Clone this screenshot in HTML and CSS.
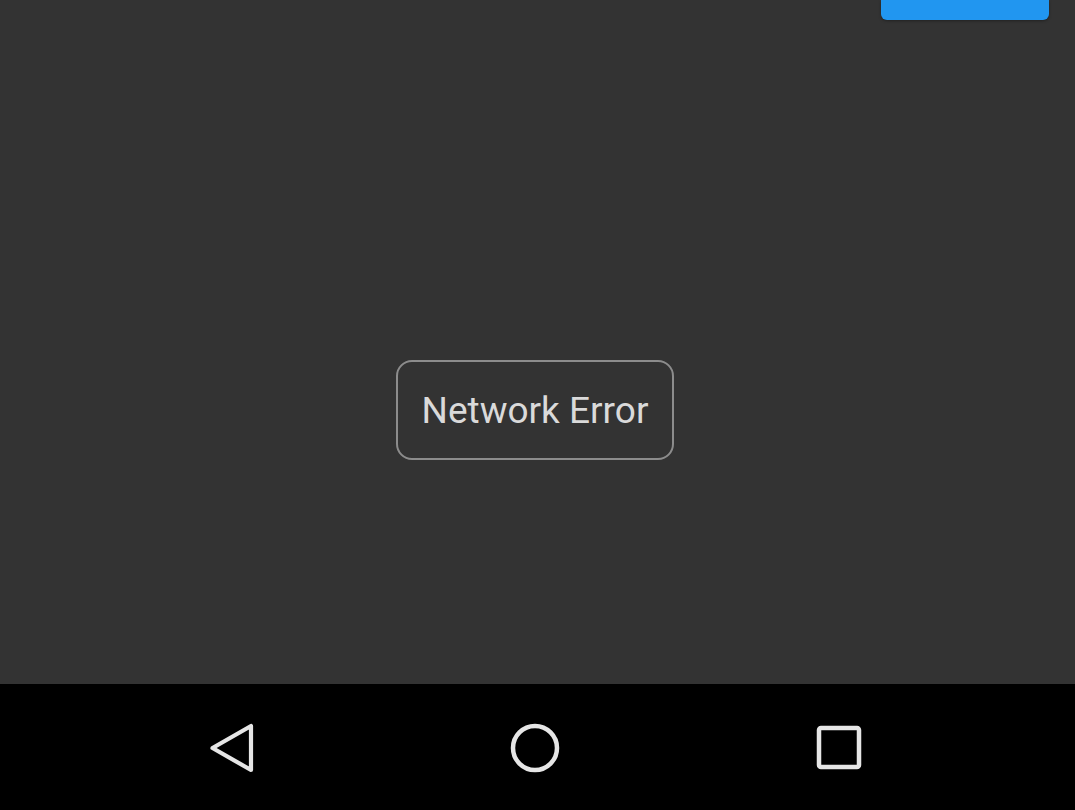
FILE: index.html
```html
<!DOCTYPE html>
<html>
<head>
<meta charset="utf-8">
<link rel="stylesheet" href="styles.css">
</head>
<body>
<div class="screen">
  <div class="main">
    <div class="topbar">
      <div class="blue-btn"></div>
    </div>
    <div class="content">
      <div class="error-box">Network Error</div>
    </div>
  </div>
  <div class="navbar">
    <div class="nav-icon">
      <svg width="56" height="56" viewBox="0 0 56 56"><path d="M48 6 L48 50 L9.5 28 Z" fill="none" stroke="#e6e6e6" stroke-width="4.2" stroke-linejoin="round"/></svg>
    </div>
    <div class="nav-icon">
      <svg width="56" height="56" viewBox="0 0 56 56"><circle cx="28" cy="28" r="22" fill="none" stroke="#e6e6e6" stroke-width="4.5"/></svg>
    </div>
    <div class="nav-icon">
      <svg width="56" height="56" viewBox="0 0 56 56"><rect x="8" y="8" width="40" height="39" rx="2" fill="none" stroke="#e6e6e6" stroke-width="4.5"/></svg>
    </div>
  </div>
</div>
</body>
</html>
```
FILE: styles.css
```css
html, body {
  margin: 0;
  padding: 0;
  background: #000;
}
.screen {
  width: 1075px;
  height: 810px;
  display: flex;
  flex-direction: column;
  font-family: Roboto, "Noto Sans", sans-serif;
}
.main {
  height: 684px;
  background: #333333;
  display: flex;
  flex-direction: column;
}
.topbar {
  height: 20px;
  display: flex;
  justify-content: flex-end;
  padding-right: 26px;
}
.blue-btn {
  width: 168px;
  height: 20px;
  background: #2196f0;
  border-radius: 0 0 6px 6px;
  box-shadow: 0 1px 3px rgba(0,0,0,0.35);
}
.content {
  flex: 1;
  display: flex;
  justify-content: center;
  align-items: flex-start;
  padding-top: 340px;
  padding-right: 5px;
}
.error-box {
  width: 274px;
  height: 96px;
  border: 2px solid #8c8c8c;
  border-radius: 16px;
  display: flex;
  align-items: center;
  justify-content: center;
  color: #dadada;
  font-size: 37px;
}
.navbar {
  flex: 1;
  background: #000;
  display: flex;
  justify-content: center;
  align-items: center;
  gap: 248px;
  padding-right: 5px;
  padding-top: 2px;
}
.nav-icon {
  width: 56px;
  height: 56px;
}
.nav-icon svg {
  display: block;
}
```
